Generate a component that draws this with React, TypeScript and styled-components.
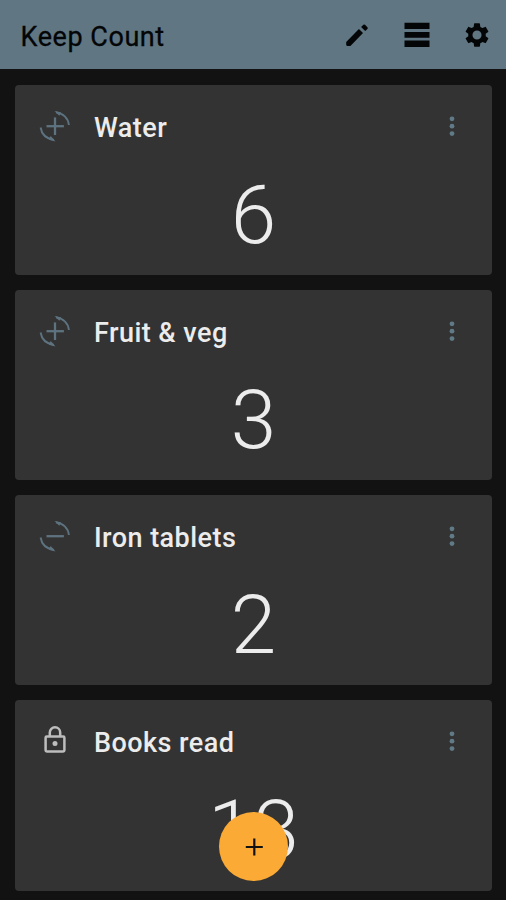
import React from "react";
import styled, { createGlobalStyle } from "styled-components";

const Global = createGlobalStyle`
  * { box-sizing: border-box; }
  body { margin: 0; background: #121212; font-family: Roboto, sans-serif; overflow: hidden; }
`;

const Screen = styled.main`
  position: relative;
  height: 900px;
  overflow: hidden;
  background: #121212;
`;

const Toolbar = styled.header`
  display: flex;
  align-items: center;
  height: 69px;
  padding: 0 15px 0 20.5px;
  background: #607682;
  color: #030506;
`;

const Title = styled.h1`
  flex: 1;
  margin: 4px 0 0;
  font-size: 27px;
  font-weight: 400;
  letter-spacing: 0.55px;
  white-space: nowrap;
  -webkit-text-stroke: 0.3px currentColor;
`;

const Actions = styled.div`
  display: flex;
  align-items: center;
  gap: 32px;
`;

const Icon = styled.svg<{ $size: number }>`
  display: block;
  flex: none;
  width: ${(p) => p.$size}px;
  height: ${(p) => p.$size}px;
`;

const List = styled.section`
  display: flex;
  flex-direction: column;
  gap: 15px;
  padding: 15.5px 14px 0 15px;
`;

const Card = styled.article`
  height: 190.3px;
  flex: none;
  border-radius: 4px;
  background: #333333;
`;

const CardHeader = styled.div`
  display: flex;
  align-items: center;
  height: 82px;
  padding: 0 26px 0 24px;
`;

const Name = styled.h2`
  flex: 1;
  margin: 4px 0 0 23px;
  color: #ececec;
  font-size: 27px;
  line-height: 32px;
  font-weight: 500;
  letter-spacing: 0.45px;
`;

const Count = styled.div`
  color: #ececec;
  font-size: 82px;
  line-height: 96px;
  font-weight: 300;
  text-align: center;
`;

const AddButton = styled.button`
  position: absolute;
  left: 219px;
  top: 812px;
  display: grid;
  place-items: center;
  width: 69px;
  height: 69px;
  padding: 0;
  border: 0;
  border-radius: 50%;
  background: #fbab35;
  color: #111;
`;

type Kind = "plus" | "minus" | "lock";
const counters: { name: string; count: number; kind: Kind }[] = [
  { name: "Water", count: 6, kind: "plus" },
  { name: "Fruit & veg", count: 3, kind: "plus" },
  { name: "Iron tablets", count: 2, kind: "minus" },
  { name: "Books read", count: 13, kind: "lock" },
];

function KindIcon({ kind }: { kind: Kind }) {
  if (kind === "lock")
    return (
      <Icon $size={32} viewBox="0 0 32 32" fill="none" stroke="#bdbdbd" strokeWidth="2.5">
        <rect x="6.6" y="11.6" width="18.8" height="14.8" rx="1.2" />
        <path d="M10.8 11.5V7.5a5.2 5.2 0 0 1 10.4 0v4" />
        <circle cx="16" cy="18.6" r="2.5" fill="#bdbdbd" stroke="none" />
      </Icon>
    );
  return (
    <Icon $size={32} viewBox="0 0 32 32" fill="none" stroke="#5d737f">
      <path strokeWidth="1.9" d="M17 2.2C24.5 3.5 29.3 8.5 29.9 15M1.6 17.5C2.5 24 7.5 28.6 15 30" />
      <path fill="#5d737f" stroke="none" d="M15.5.9l6.8 1.6-2 3.3zM16.5 31.4l-6.8-1.6 2-3.7z" />
      <path strokeWidth="2.3" d="M7.5 16.2h17.4" />
      {kind === "plus" && <path strokeWidth="2.3" d="M16 7.4v17.6" />}
    </Icon>
  );
}

export default function App() {
  return (
    <>
      <Global />
      <Screen>
        <Toolbar>
          <Title>Keep Count</Title>
          <Actions>
            <Icon $size={28} viewBox="0 0 28 28" fill="currentColor">
              <path d="M3.2 20.9v2.9q0 1.1 1.1 1.1h3.1L20 12.1 15.9 8zM24.4 7.9a1.1 1.1 0 0 0 0-1.6L22 3.8a1.1 1.1 0 0 0-1.6 0L18.1 6l4.1 4.1z" />
            </Icon>
            <Icon $size={28} viewBox="0 0 28 28" fill="currentColor">
              <path d="M1.5 1.7h25v6.4h-25zM1.5 10.9h25v5.9h-25zM1.5 19.6h25v6.3h-25z" />
            </Icon>
            <Icon $size={28} viewBox="0 0 24 24" fill="currentColor">
              <path d="M19.43 12.98c.04-.32.07-.64.07-.98s-.03-.66-.07-.98l2.11-1.65c.19-.15.24-.42.12-.64l-2-3.46c-.12-.22-.39-.3-.61-.22l-2.49 1c-.52-.4-1.08-.73-1.69-.98l-.38-2.65A.49.49 0 0 0 14 2h-4c-.25 0-.46.18-.49.42l-.38 2.65c-.61.25-1.17.59-1.69.98l-2.49-1c-.23-.09-.49 0-.61.22l-2 3.46c-.13.22-.07.49.12.64l2.11 1.65c-.04.32-.07.65-.07.98s.03.66.07.98l-2.11 1.65c-.19.15-.24.42-.12.64l2 3.46c.12.22.39.3.61.22l2.49-1c.52.4 1.08.73 1.69.98l.38 2.65c.03.24.24.42.49.42h4c.25 0 .46-.18.49-.42l.38-2.65c.61-.25 1.17-.59 1.69-.98l2.49 1c.23.09.49 0 .61-.22l2-3.46c.12-.22.07-.49-.12-.64l-2.11-1.65zM12 15.9a3.9 3.9 0 1 1 0-7.8 3.9 3.9 0 0 1 0 7.8z" />
            </Icon>
          </Actions>
        </Toolbar>
        <List>
          {counters.map((c) => (
            <Card key={c.name}>
              <CardHeader>
                <KindIcon kind={c.kind} />
                <Name>{c.name}</Name>
                <Icon $size={28} viewBox="0 0 28 28" fill="#607b87">
                  <circle cx="14" cy="6.8" r="2.4" />
                  <circle cx="14" cy="14.2" r="2.4" />
                  <circle cx="14" cy="21.6" r="2.4" />
                </Icon>
              </CardHeader>
              <Count>{c.count}</Count>
            </Card>
          ))}
        </List>
        <AddButton aria-label="Add counter">
          <Icon $size={28} viewBox="0 0 28 28" fill="none" stroke="currentColor" strokeWidth="2.2">
            <path d="M5.8 14h17M14.3 5.5v17" />
          </Icon>
        </AddButton>
      </Screen>
    </>
  );
}
